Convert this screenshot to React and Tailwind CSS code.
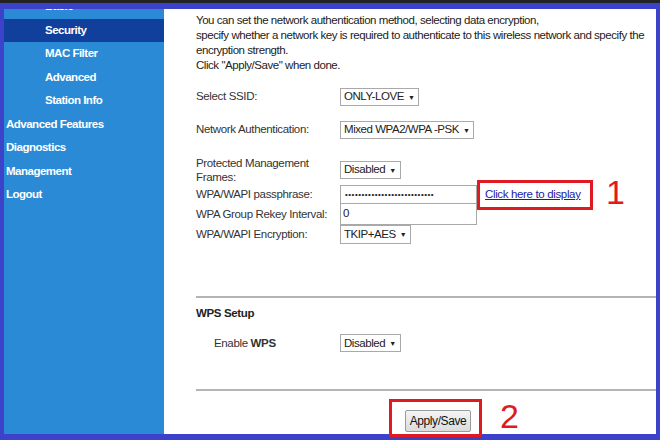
import React from 'react';

const font = { fontFamily: '"Liberation Sans", Arial, sans-serif' };

const Select = ({ value, className = '' }) => (
  <div className={`h-full border border-[#a9a9a9] bg-white flex items-center pl-[3px] pr-[4px] text-[11.5px] tracking-[-0.45px] text-[#222] ${className}`}>
    <span>{value}</span>
    <span className="ml-[4px] text-[7px] leading-none">▼</span>
  </div>
);

const NavItem = ({ label, sub, active }) => (
  <div className={`h-[23.5px] flex items-center font-bold text-[11.5px] tracking-[-0.5px] text-white ${sub ? 'pl-[41px]' : 'pl-[2px]'} ${active ? 'bg-[#113f9c]' : ''}`}>
    {label}
  </div>
);

export default function App() {
  return (
    <div style={font} className="w-[660px] h-[440px] overflow-hidden bg-[#3c42c9] border-t-[3px] border-[#232323] pt-[6px] px-[4px] pb-[6px] flex">
      {/* sidebar */}
      <div className="w-[160px] bg-[#2a8ad5] overflow-hidden">
        <div className="-mt-[14px]">
          <NavItem label="Basic" sub />
          <NavItem label="Security" sub active />
          <NavItem label="MAC Filter" sub />
          <NavItem label="Advanced" sub />
          <NavItem label="Station Info" sub />
          <NavItem label="Advanced Features" />
          <NavItem label="Diagnostics" />
          <NavItem label="Management" />
          <NavItem label="Logout" />
        </div>
      </div>

      {/* main */}
      <div className="flex-1 bg-white relative pl-[32px] text-[11.5px] tracking-[-0.35px] text-[#222]">
        <div className="pt-[4px] leading-[15px] tracking-[-0.45px]">
          <div>You can set the network authentication method, selecting data encryption,</div>
          <div className="whitespace-nowrap">specify whether a network key is required to authenticate to this wireless network and specify the</div>
          <div>encryption strength.</div>
          <div>Click "Apply/Save" when done.</div>
        </div>

        <div className="mt-[15px] flex items-center h-[18px]">
          <div className="w-[144px] text-[#333]">Select SSID:</div>
          <Select value="ONLY-LOVE" />
        </div>

        <div className="mt-[15px] flex items-center h-[18px]">
          <div className="w-[144px] text-[#333]">Network Authentication:</div>
          <Select value="Mixed WPA2/WPA -PSK" />
        </div>

        <div className="mt-[17px] flex items-center h-[28px]">
          <div className="w-[144px] text-[#333] leading-[14px]">Protected Management<br />Frames:</div>
          <div className="h-[18px]"><Select value="Disabled" /></div>
        </div>

        <div className="mt-[1px] flex items-center h-[19px]">
          <div className="w-[144px] text-[#333] whitespace-nowrap">WPA/WAPI passphrase:</div>
          <div className="w-[137px] h-full border border-[#a9a9a9] flex items-center pl-[4px] text-[8px] tracking-[0.5px] overflow-hidden whitespace-nowrap">
            •••••••••••••••••••••••••••
          </div>
          <a href="#" className="ml-[8px] text-[#1a1aa6] underline whitespace-nowrap">Click here to display</a>
        </div>

        <div className="flex items-center h-[21px]">
          <div className="w-[144px] text-[#333] whitespace-nowrap">WPA Group Rekey Interval:</div>
          <div className="w-[137px] h-full border border-t-0 border-[#a9a9a9] flex items-center pl-[2px]">0</div>
        </div>

        <div className="flex items-center h-[19px]">
          <div className="w-[144px] text-[#333] whitespace-nowrap">WPA/WAPI Encryption:</div>
          <Select value="TKIP+AES" />
        </div>

        <div className="mt-[52px] border-t-2 border-[#b4b4b4]" />
        <div className="mt-[7px] font-bold text-[#222]">WPS Setup</div>

        <div className="mt-[12px] flex items-center h-[18px]">
          <div className="w-[126px] ml-[18px] text-[#333]">Enable <span className="font-bold">WPS</span></div>
          <Select value="Disabled" />
        </div>

        <div className="mt-[37px] border-t-2 border-[#b4b4b4]" />

        <div className="mt-[19px] flex justify-center pl-[24px]">
          <button className="h-[22px] px-[4px] border border-[#9a9a9a] rounded-[2px] bg-gradient-to-b from-[#f4f4f4] to-[#dcdcdc] text-[12px] tracking-[-0.4px] text-[#111]">Apply/Save</button>
        </div>

        {/* annotations */}
        <div className="absolute left-[313px] top-[171px] w-[116px] h-[30px] border-[3px] border-[#e01a22]" />
        <div className="absolute left-[442px] top-[166px] text-[34px] leading-none text-[#e01a22]">1</div>
        <div className="absolute left-[225px] top-[390px] w-[93px] h-[38px] border-[3px] border-[#e01a22]" />
        <div className="absolute left-[336px] top-[390px] text-[34px] leading-none text-[#e01a22]">2</div>
      </div>
    </div>
  );
}
